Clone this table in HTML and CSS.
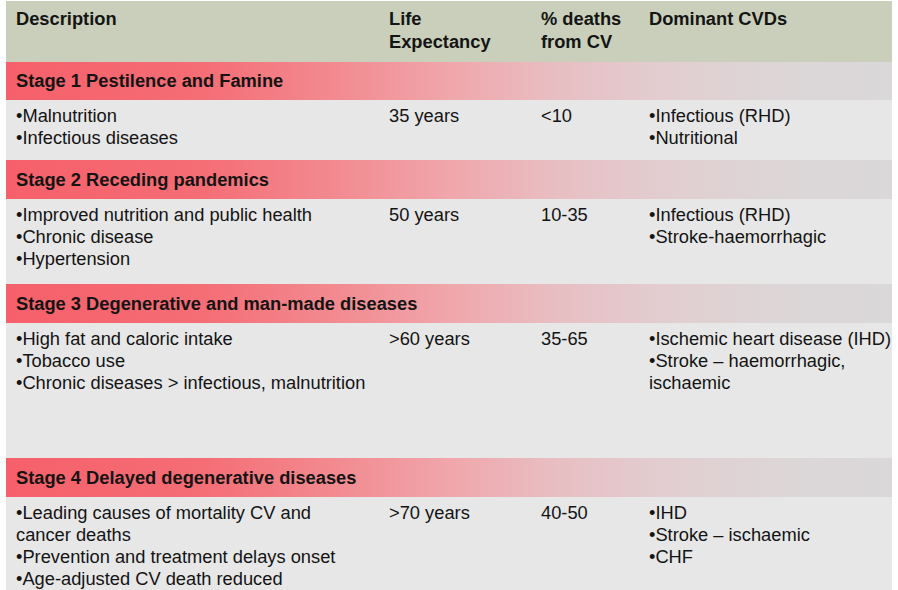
FILE: index.html
```html
<!DOCTYPE html>
<html>
<head>
<meta charset="utf-8">
<link rel="stylesheet" href="styles.css">
</head>
<body>
<div class="table">
  <div class="head">Description</div>
  <div class="head">Life<br>Expectancy</div>
  <div class="head">% deaths<br>from CV</div>
  <div class="head">Dominant CVDs</div>

  <div class="stage s1">Stage 1 Pestilence and Famine</div>
  <div class="cell r1"><div>•Malnutrition</div><div>•Infectious diseases</div></div>
  <div class="cell r1">35 years</div>
  <div class="cell r1">&lt;10</div>
  <div class="cell r1"><div>•Infectious (RHD)</div><div>•Nutritional</div></div>

  <div class="stage">Stage 2 Receding pandemics</div>
  <div class="cell r2"><div>•Improved nutrition and public health</div><div>•Chronic disease</div><div>•Hypertension</div></div>
  <div class="cell r2">50 years</div>
  <div class="cell r2">10-35</div>
  <div class="cell r2"><div>•Infectious (RHD)</div><div>•Stroke-haemorrhagic</div></div>

  <div class="stage">Stage 3 Degenerative and man-made diseases</div>
  <div class="cell r3"><div>•High fat and caloric intake</div><div>•Tobacco use</div><div>•Chronic diseases &gt; infectious, malnutrition</div></div>
  <div class="cell r3">&gt;60 years</div>
  <div class="cell r3">35-65</div>
  <div class="cell r3"><div>•Ischemic heart disease (IHD)</div><div>•Stroke – haemorrhagic,</div><div>ischaemic</div></div>

  <div class="stage">Stage 4 Delayed degenerative diseases</div>
  <div class="cell r4"><div>•Leading causes of mortality CV and</div><div>cancer deaths</div><div>•Prevention and treatment delays onset</div><div>•Age-adjusted CV death reduced</div></div>
  <div class="cell r4">&gt;70 years</div>
  <div class="cell r4">40-50</div>
  <div class="cell r4"><div>•IHD</div><div>•Stroke – ischaemic</div><div>•CHF</div></div>
</div>
</body>
</html>
```
FILE: styles.css
```css
html, body {
  margin: 0;
  padding: 0;
  background: #ffffff;
  overflow: hidden;
}
body {
  font-family: "Liberation Sans", Arial, sans-serif;
  font-size: 18.3px;
  color: #141414;
}
.table {
  margin: 1px 0 0 6px;
  width: 886px;
  display: grid;
  grid-template-columns: 373px 152px 108px 253px;
}
.head {
  background: #c9cfba;
  font-weight: bold;
  height: 61px;
  box-sizing: border-box;
  padding: 6px 0 0 10px;
  line-height: 23px;
}
.stage {
  grid-column: 1 / -1;
  height: 39px;
  display: flex;
  align-items: center;
  padding-left: 10px;
  font-weight: bold;
  background: linear-gradient(to right, #f6606a 0%, #f56d75 22%, #f28c92 38%, #f0a6ab 50%, #e8bec2 62%, #e2cdd0 74%, #dcd6d7 88%, #dad8d9 100%);
}
.s1 { height: 38px; }
.cell {
  background: #e7e7e7;
  padding: 5px 0 0 10px;
  line-height: 22px;
  white-space: nowrap;
  box-sizing: border-box;
}
.r1 { height: 60px; }
.r2 { height: 85px; }
.r3 { height: 135px; }
.r4 { height: 110px; }
```
